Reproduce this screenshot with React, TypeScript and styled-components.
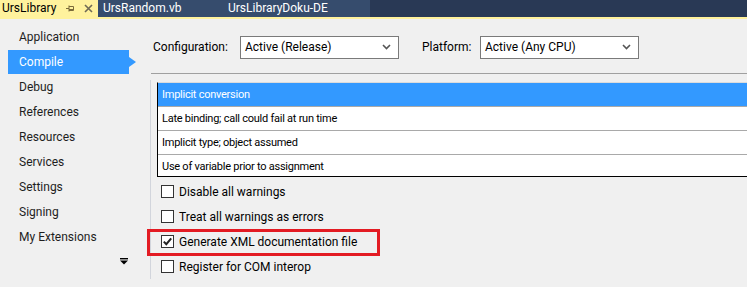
import React from 'react'
import styled, { createGlobalStyle } from 'styled-components'

const GlobalStyle = createGlobalStyle`
  html, body {
    margin: 0;
    padding: 0;
    background: #f0f0f0;
    font-family: 'Segoe UI', Roboto, 'Noto Sans', sans-serif;
    font-size: 12px;
    color: #000;
    overflow: hidden;
  }
`

const pages = [
  'Application',
  'Compile',
  'Debug',
  'References',
  'Resources',
  'Services',
  'Settings',
  'Signing',
  'My Extensions',
]

const warnings = [
  'Implicit conversion',
  'Late binding; call could fail at run time',
  'Implicit type; object assumed',
  'Use of variable prior to assignment',
  '',
]

const options = [
  { label: 'Disable all warnings', checked: false },
  { label: 'Treat all warnings as errors', checked: false },
  { label: 'Generate XML documentation file', checked: true, marked: true },
  { label: 'Register for COM interop', checked: false },
]

// chevron used by the combo boxes
const Chevron = () => (
  <svg width="9" height="6" viewBox="0 0 9 6">
    <path d="M1 1 L4.5 4.5 L8 1" fill="none" stroke="#555" strokeWidth="1.6" />
  </svg>
)

const App = () => {
  return (
    <Page>
      <GlobalStyle />
      <TabBar>
        <ActiveTab>
          <TabTitle>UrsLibrary</TabTitle>
          <TabIcons>
            <svg width="9" height="7" viewBox="0 0 9 7">
              <path d="M0 3.5 H3 M3 0.5 V6.5 M3 1.5 H7.5 V5.5 H3 M3 4.5 H7.5" fill="none" stroke="#7a6a3a" strokeWidth="1" />
            </svg>
            <svg width="9" height="9" viewBox="0 0 9 9">
              <path d="M1 1 L8 8 M8 1 L1 8" stroke="#6f6a55" strokeWidth="1.6" />
            </svg>
          </TabIcons>
        </ActiveTab>
        <TabWell>
          <Tab width={125}>UrsRandom.vb</Tab>
          <Tab width={147}>UrsLibraryDoku-DE</Tab>
        </TabWell>
      </TabBar>

      <Body>
        <Sidebar>
          {pages.map((p) => (
            <NavItem key={p} active={p === 'Compile'}>
              {p}
            </NavItem>
          ))}
          <MoreGlyph>
            <svg width="8" height="7" viewBox="0 0 8 7">
              <rect x="0" y="0" width="8" height="1.4" fill="#000" />
              <path d="M0 2.5 H8 L4 6.5 Z" fill="#000" />
            </svg>
          </MoreGlyph>
        </Sidebar>

        <Content>
          <ConfigRow>
            <Label width={87}>Configuration:</Label>
            <Combo>
              <span>Active (Release)</span>
              <Chevron />
            </Combo>
            <Label width={58} gap={23}>
              Platform:
            </Label>
            <Combo>
              <span>Active (Any CPU)</span>
              <Chevron />
            </Combo>
          </ConfigRow>
          <Separator />

          <ScrollArea>
            <WarningList>
              {warnings.map((w, i) => (
                <WarningRow key={i} selected={i === 0}>
                  {w}
                </WarningRow>
              ))}
            </WarningList>

            <Options>
              {options.map((o) => (
                <OptionRow key={o.label}>
                  <CheckBox>
                    {o.checked && (
                      <svg width="11" height="11" viewBox="0 0 11 11">
                        <path d="M1.8 5.6 L4.3 8.2 L9.2 2.4" fill="none" stroke="#222" strokeWidth="2" />
                      </svg>
                    )}
                  </CheckBox>
                  <span>{o.label}</span>
                  {o.marked && <Highlight />}
                </OptionRow>
              ))}
            </Options>
          </ScrollArea>
        </Content>
      </Body>
    </Page>
  )
}

const Page = styled.div`
  width: 747px;
  height: 287px;
  display: flex;
  flex-direction: column;
`

// document tabs
const TabBar = styled.div`
  display: flex;
  height: 17px;
  background: #293955;
  border-bottom: 2px solid #fff29d;
`

const ActiveTab = styled.div`
  width: 98px;
  display: flex;
  align-items: center;
  background: #fff29d;
  color: #000;
  padding-left: 2px;
  box-sizing: border-box;
`

const TabTitle = styled.span`
  flex: 1;
  line-height: 17px;
`

const TabIcons = styled.div`
  display: flex;
  align-items: center;
  gap: 9px;
  padding-right: 5px;
`

const TabWell = styled.div`
  display: flex;
  background: #364c6d;
`

const Tab = styled.div<{ width: number }>`
  width: ${({ width }) => width}px;
  padding-left: 5px;
  box-sizing: border-box;
  color: #fff;
  line-height: 17px;
`

const Body = styled.div`
  flex: 1;
  display: flex;
`

// left page list
const Sidebar = styled.div`
  width: 150px;
  padding-top: 6px;
  box-sizing: border-box;
  display: flex;
  flex-direction: column;
`

const NavItem = styled.div<{ active?: boolean }>`
  position: relative;
  height: 25px;
  line-height: 24px;
  width: 121px;
  margin-left: 8px;
  padding-left: 11px;
  box-sizing: border-box;
  color: ${({ active }) => (active ? '#fff' : '#1e1e1e')};
  background: ${({ active }) => (active ? '#3399ff' : 'transparent')};

  ${({ active }) =>
    active &&
    `
    height: 24px;
    margin-bottom: 1px;
    &::after {
      content: '';
      position: absolute;
      left: 121px;
      top: 7px;
      border-left: 7px solid #3399ff;
      border-top: 5px solid transparent;
      border-bottom: 5px solid transparent;
    }
  `}
`

const MoreGlyph = styled.div`
  display: flex;
  justify-content: flex-end;
  padding: 8px 22px 0 0;
`

// right side
const Content = styled.div`
  flex: 1;
  display: flex;
  flex-direction: column;
`

const ConfigRow = styled.div`
  display: flex;
  align-items: center;
  padding: 17px 0 0 3px;
  height: 22px;
`

const Label = styled.span<{ width: number; gap?: number }>`
  width: ${({ width }) => width}px;
  margin-left: ${({ gap }) => gap || 0}px;
`

const Combo = styled.div`
  width: 159px;
  height: 23px;
  box-sizing: border-box;
  border: 1px solid #7a7a7a;
  background: #fff;
  display: flex;
  align-items: center;
  justify-content: space-between;
  padding: 0 7px 0 4px;
`

const Separator = styled.div`
  margin: 15px 0 0 1px;
  height: 1px;
  background: #a0a0a0;
`

const ScrollArea = styled.div`
  margin-top: 6px;
  height: 199px;
  border-left: 1px solid #d2d5dc;
  padding-left: 6px;
  display: flex;
  flex-direction: column;
`

const WarningList = styled.div`
  margin-top: 2px;
  height: 100px;
  overflow: hidden;
  background: #fff;
  border-top: 1px solid #dcdcdc;
  border-left: 1px solid #000;
  border-bottom: 1px solid #000;
`

const WarningRow = styled.div<{ selected?: boolean }>`
  height: 23px;
  line-height: 23px;
  padding-left: 4px;
  font-size: 11px;
  letter-spacing: -0.25px;
  border-bottom: 1px solid #a9a9a9;
  background: ${({ selected }) => (selected ? '#3399ff' : '#fff')};
  color: ${({ selected }) => (selected ? '#fff' : '#000')};
  white-space: nowrap;
`

const Options = styled.div`
  display: flex;
  flex-direction: column;
  padding-top: 2px;
`

const OptionRow = styled.div`
  position: relative;
  height: 25px;
  display: flex;
  align-items: center;
  gap: 5px;
  padding-left: 4px;
`

const CheckBox = styled.div`
  width: 13px;
  height: 13px;
  box-sizing: border-box;
  border: 1px solid #333;
  background: #fff;
  display: flex;
  align-items: center;
  justify-content: center;
`

// red annotation frame drawn over the row
const Highlight = styled.div`
  position: absolute;
  left: -10px;
  top: 0;
  width: 233px;
  height: 27px;
  box-sizing: border-box;
  border: 3px solid #e31b23;
  pointer-events: none;
`

export default App
